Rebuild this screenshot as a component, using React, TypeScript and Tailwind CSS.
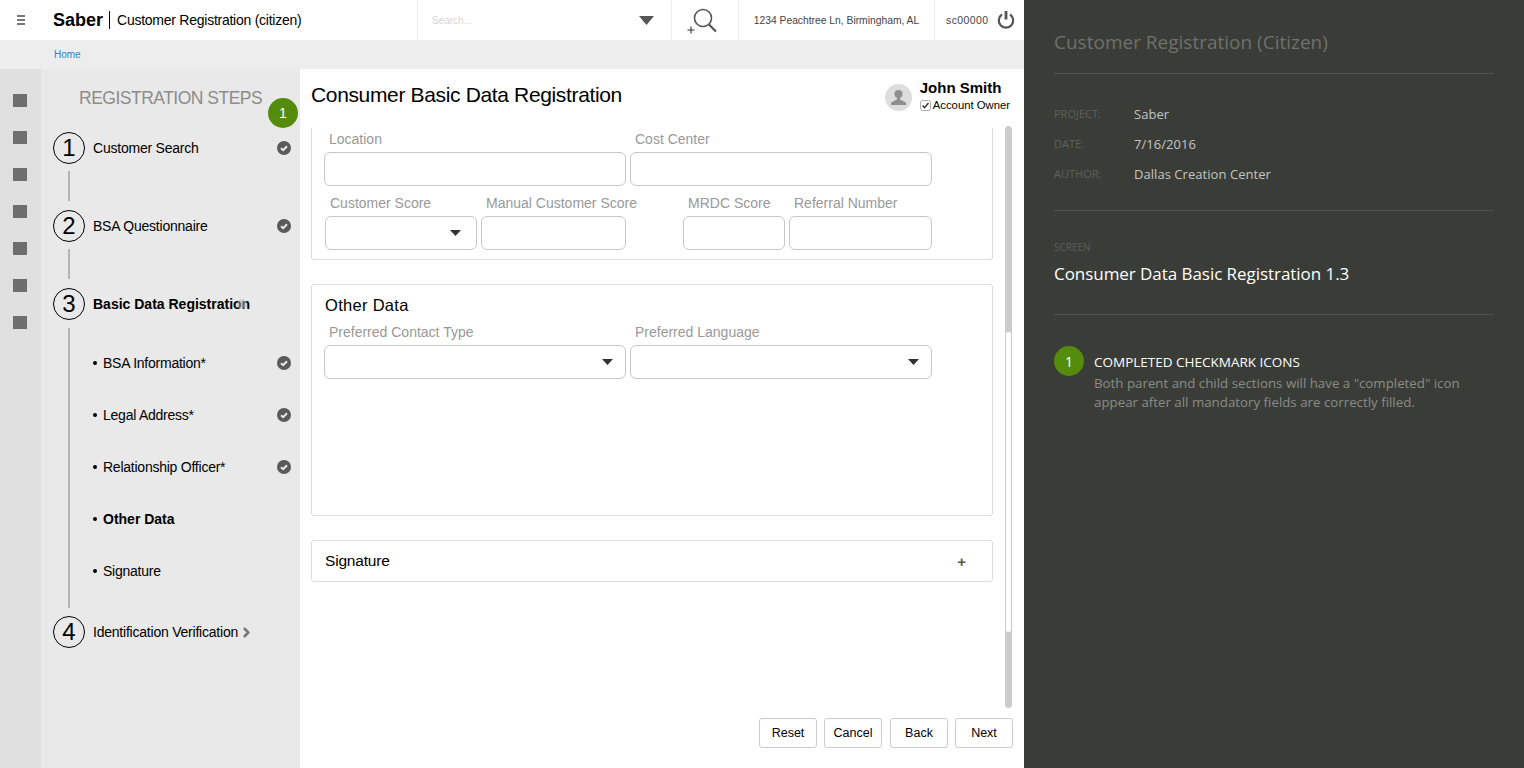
import React from 'react';
import { ChevronRight } from 'lucide-react';

const RAIL_ITEMS = [0, 1, 2, 3, 4, 5, 6];

const SANS = 'font-["Liberation_Sans",Arial,sans-serif]';

const DoneIcon = () => (
  <svg width="14" height="14" viewBox="0 0 14 14" className="shrink-0">
    <circle cx="7" cy="7" r="7" fill="#5a5a5a" />
    <path d="M4 7.2 L6.2 9.2 L10 5.2" fill="none" stroke="#e9e9e9" strokeWidth="2" />
  </svg>
);

const Caret = ({ size = 'sm' }: { size?: 'sm' | 'lg' }) => (
  <svg
    width={size === 'lg' ? 15 : 11}
    height={size === 'lg' ? 9 : 6}
    viewBox="0 0 12 7"
    preserveAspectRatio="none"
    className="shrink-0"
  >
    <path d="M0 0 H12 L6 7 Z" fill={size === 'lg' ? '#555' : '#333'} />
  </svg>
);

const StepHead = ({ n, label, bold, children }: { n: number; label: string; bold?: boolean; children?: React.ReactNode }) => (
  <div className="flex h-[32px] items-center">
    <div className="flex h-[32px] w-[32px] shrink-0 items-center justify-center rounded-full border border-black text-[24px] text-black">
      {n}
    </div>
    <span className={`ml-2 text-[14px] text-black ${bold ? 'font-bold' : 'tracking-[-0.22px]'}`}>{label}</span>
    {children}
  </div>
);

const SubStep = ({ label, done, bold }: { label: string; done?: boolean; bold?: boolean }) => (
  <div className="flex h-[52px] items-center">
    <span className="ml-[17px] h-[4px] w-[4px] rounded-full bg-black" />
    <span className={`ml-[6px] text-[14px] text-black ${bold ? 'font-bold' : 'tracking-[-0.24px]'}`}>{label}</span>
    {done && (
      <span className="ml-auto">
        <DoneIcon />
      </span>
    )}
  </div>
);

const Field = ({ label, className, select, wide }: { label: string; className: string; select?: boolean; wide?: boolean }) => (
  <div className={className}>
    <div className="ml-[5px] h-[20px] whitespace-nowrap text-[14px] leading-[20px] text-[#999]">{label}</div>
    <div className={`mt-[3px] flex h-[34px] items-center justify-end rounded-[6px] border border-[#c8c8c8] ${wide ? 'pr-[12px]' : 'pr-[15px]'}`}>
      {select && <Caret />}
    </div>
  </div>
);

const ActionButton = ({ label, className }: { label: string; className?: string }) => (
  <button className={`h-[30px] w-[58px] rounded-[3px] border border-[#ccc] bg-white text-[12.5px] text-black ${className ?? ''}`}>
    {label}
  </button>
);

export default function App() {
  return (
    <div className={`flex h-[768px] w-full overflow-hidden bg-white ${SANS}`}>
      <div className="flex w-[1024px] shrink-0 flex-col">
        {/* top bar */}
        <header className="flex h-[40px] shrink-0 items-center bg-white">
          <div className="flex w-[417px] items-center">
            <div className="ml-[17px] flex w-[8px] flex-col gap-[2px]">
              <span className="h-[2px] bg-[#777]" />
              <span className="h-[2px] bg-[#777]" />
              <span className="h-[2px] bg-[#777]" />
            </div>
            <span className="ml-[28px] text-[18px] font-bold text-black">Saber</span>
            <span className="ml-[6px] mr-[7px] h-[18px] w-px bg-black" />
            <span className="pt-px text-[14px] tracking-[-0.25px] text-black">Customer Registration (citizen)</span>
          </div>
          <div className="flex h-full w-[254px] items-center border-l border-[#eee] pl-[14px] pr-[17px]">
            <span className="text-[10px] text-[#d5d5d5]">Search...</span>
            <span className="ml-auto">
              <Caret size="lg" />
            </span>
          </div>
          <div className="flex h-full w-[67px] items-center border-l border-[#eee] pl-[14px]">
            <svg width="32" height="32" viewBox="0 0 32 32" fill="none">
              <circle cx="17" cy="14" r="8.5" stroke="#555" strokeWidth="1.6" />
              <path d="M23 20.5 L30 27.5" stroke="#555" strokeWidth="2.2" />
              <path d="M1.5 26 H8.5 M5 22.5 V29.5" stroke="#333" strokeWidth="1.1" />
            </svg>
          </div>
          <div className="flex h-full w-[196px] items-center justify-center border-l border-[#eee] pt-px text-[10.3px] text-[#444]">
            1234 Peachtree Ln, Birmingham, AL
          </div>
          <div className="flex h-full flex-1 items-center border-l border-[#eee] pl-[11px]">
            <span className="pt-px text-[10.5px] tracking-[0.4px] text-[#444]">sc00000</span>
            <svg width="18" height="20" viewBox="0 0 18 20" fill="none" className="ml-[8px]">
              <path d="M5 4.5 A7.2 7.2 0 1 0 13 4.5" stroke="#555" strokeWidth="2.2" />
              <path d="M9 1 V9.5" stroke="#555" strokeWidth="2.8" />
            </svg>
          </div>
        </header>

        {/* breadcrumb */}
        <div className="flex h-[29px] shrink-0 items-center bg-[#eeedee] pl-[54px] text-[10px] text-[#2f7fd0]">Home</div>

        <div className="flex min-h-0 flex-1">
          {/* icon rail */}
          <nav className="flex w-[41px] shrink-0 flex-col items-start gap-[24px] bg-[#e0e0e0] pl-[13px] pt-[25px]">
            {RAIL_ITEMS.map((i) => (
              <span key={i} className="h-[13px] w-[14px] bg-[#6e6e6e]" />
            ))}
          </nav>

          {/* steps */}
          <aside className="relative w-[259px] shrink-0 bg-[#e9e9e9] pl-[12px] pr-[9px]">
            <div className="whitespace-nowrap pl-[26px] pt-[19px] text-[17.5px] leading-[21px] tracking-[-0.5px] text-[#8c8c8c]">
              REGISTRATION STEPS
            </div>
            <div className="absolute left-[227px] top-[29px] flex h-[30px] w-[30px] items-center justify-center rounded-full bg-[#558c0b] text-[14px] text-white">
              1
            </div>

            <div className="mt-[23px]">
              <StepHead n={1} label="Customer Search">
                <span className="ml-auto">
                  <DoneIcon />
                </span>
              </StepHead>
              <div className="ml-[15px] mt-[7px] h-[30px] w-[2px] bg-[#b4b4b4]" />
              <div className="mt-[9px]">
                <StepHead n={2} label="BSA Questionnaire">
                  <span className="ml-auto">
                    <DoneIcon />
                  </span>
                </StepHead>
              </div>
              <div className="ml-[15px] mt-[7px] h-[30px] w-[2px] bg-[#b4b4b4]" />
              <div className="mt-[9px]">
                <StepHead n={3} label="Basic Data Registration" bold>
                  {/* half faded check sitting on the end of the label */}
                  <svg width="10" height="10" viewBox="0 0 10 10" className="-ml-[13px] opacity-50">
                    <circle cx="5" cy="5" r="5" fill="#bbb" />
                  </svg>
                </StepHead>
              </div>
              <div className="flex h-[288px]">
                <div className="ml-[15px] mt-[8px] h-[280px] w-[2px] shrink-0 bg-[#b4b4b4]" />
                <div className="mt-[17px] min-w-0 flex-1 pl-[6px]">
                  <SubStep label="BSA Information*" done />
                  <SubStep label="Legal Address*" done />
                  <SubStep label="Relationship Officer*" done />
                  <SubStep label="Other Data" bold />
                  <SubStep label="Signature" />
                </div>
              </div>
              <div className="mt-[8px]">
                <StepHead n={4} label="Identification Verification">
                  <ChevronRight size={15} strokeWidth={4} className="ml-[1px] text-[#777]" />
                </StepHead>
              </div>
            </div>
          </aside>

          {/* main */}
          <main className="flex min-w-0 flex-1 flex-col">
            <div className="flex h-[58px] shrink-0 pl-[11px] pr-[14px]">
              <h1 className="pt-[11px] text-[21px] leading-[30px] tracking-[-0.35px] text-black">Consumer Basic Data Registration</h1>
              <div className="ml-auto flex pt-[10px]">
                <div className="mt-[5px] flex h-[27px] w-[27px] items-center justify-center overflow-hidden rounded-full bg-[#ddd]">
                  <svg width="17" height="17" viewBox="0 0 17 17">
                    <circle cx="8.5" cy="5" r="4" fill="#8e8e8e" />
                    <path d="M7 8 H10 V10.5 L16 13.5 V16 H1 V13.5 L7 10.5 Z" fill="#8e8e8e" />
                  </svg>
                </div>
                <div className="ml-[8px]">
                  <div className="text-[15px] font-bold leading-[18px] text-black">John Smith</div>
                  <div className="mt-px flex items-center text-[11.3px] leading-[14px] text-black">
                    <svg width="11" height="11" viewBox="0 0 11 11" fill="none" className="mr-[2px]">
                      <rect x="0.5" y="0.5" width="10" height="10" rx="2" stroke="#aaa" />
                      <path d="M2.5 5.5 L4.6 7.8 L8.5 3" stroke="#333" strokeWidth="1.4" />
                    </svg>
                    Account Owner
                  </div>
                </div>
              </div>
            </div>

            <div className="flex min-h-0 flex-1">
              <div className="ml-[11px] w-[682px] shrink-0">
                {/* section cut off by scrolling, so no top edge */}
                <section className="mt-px h-[132px] rounded-b-[3px] border border-t-0 border-[#ddd] pl-[12px] pt-px">
                  <div className="flex gap-[4px]">
                    <Field label="Location" className="w-[302px]" />
                    <Field label="Cost Center" className="w-[302px]" />
                  </div>
                  <div className="mt-[7px] flex pl-[1px]">
                    <Field label="Customer Score" className="w-[152px]" select />
                    <Field label="Manual Customer Score" className="ml-[4px] w-[145px]" />
                    <Field label="MRDC Score" className="ml-[57px] w-[102px]" />
                    <Field label="Referral Number" className="ml-[4px] w-[143px]" />
                  </div>
                </section>

                <section className="mt-[24px] h-[232px] rounded-[3px] border border-[#ddd] pl-[12px] pt-[10px]">
                  <div className="ml-px text-[16.5px] leading-[20px] tracking-[0.3px] text-black">Other Data</div>
                  <div className="mt-[7px] flex gap-[4px]">
                    <Field label="Preferred Contact Type" className="w-[302px]" select wide />
                    <Field label="Preferred Language" className="w-[302px]" select wide />
                  </div>
                </section>

                <section className="mt-[24px] flex h-[42px] items-center justify-between rounded-[3px] border border-[#ddd] pl-[13px] pr-[26px]">
                  <span className="text-[15.5px] tracking-[-0.2px] text-black">Signature</span>
                  <span className="pt-px text-[15px] font-bold leading-none text-[#555]">+</span>
                </section>

                <div className="mt-[136px] flex w-[702px] justify-end gap-[7px]">
                  <ActionButton label="Reset" />
                  <ActionButton label="Cancel" className="mr-px" />
                  <ActionButton label="Back" />
                  <ActionButton label="Next" />
                </div>
              </div>

              {/* scrollbar */}
              <div className="-mt-px ml-[12px] h-[582px] w-[7px] shrink-0 rounded-full bg-[#ccc] px-px pt-[206px]">
                <div className="h-[300px] rounded-full bg-white" />
              </div>
            </div>
          </main>
        </div>
      </div>

      {/* notes panel */}
      <div className='min-w-0 flex-1 bg-[#3a3c37] pl-[30px] pr-[30px] font-["Open_Sans",sans-serif]'>
        <div className="h-[74px] border-b border-[#50524d] pt-[28px] text-[19px] leading-[28px] text-[#6f716c]">
          Customer Registration (Citizen)
        </div>
        <div className="h-[137px] border-b border-[#50524d] pt-[25px]">
          {[
            ['PROJECT:', 'Saber'],
            ['DATE:', '7/16/2016'],
            ['AUTHOR:', 'Dallas Creation Center'],
          ].map(([k, v]) => (
            <div key={k} className="flex h-[30px] items-center">
              <span className="w-[80px] text-[11px] text-[#5f615c]">{k}</span>
              <span className="pt-[2px] text-[13px] tracking-[0.05px] text-[#c4c5c2]">{v}</span>
            </div>
          ))}
        </div>
        <div className="h-[104px] border-b border-[#50524d] pt-[29px]">
          <div className="text-[10px] leading-[14px] text-[#5c5e59]">SCREEN</div>
          <div className="mt-[7px] text-[17px] leading-[26px] tracking-[-0.05px] text-white">Consumer Data Basic Registration 1.3</div>
        </div>
        <div className="flex pt-[31px]">
          <div className="flex h-[30px] w-[30px] shrink-0 items-center justify-center rounded-full bg-[#558c0b] text-[14px] text-white">
            1
          </div>
          <div className="ml-[10px] pt-[6px]">
            <div className="text-[13.5px] leading-[20px] text-white">COMPLETED CHECKMARK ICONS</div>
            <div className="mt-[2px] text-[13.3px] leading-[19px] text-[#8a8c87]">
              Both parent and child sections will have a "completed" icon
              <br />
              appear after all mandatory fields are correctly filled.
            </div>
          </div>
        </div>
      </div>
    </div>
  );
}
